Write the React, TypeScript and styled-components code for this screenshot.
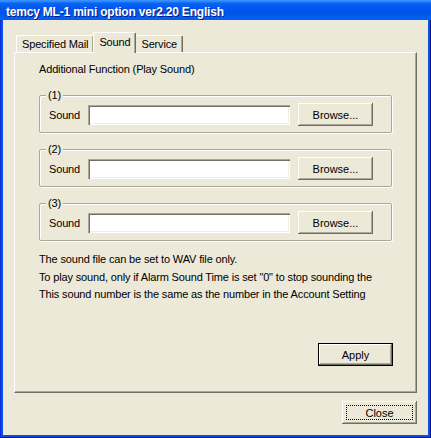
import styled, { createGlobalStyle } from "styled-components";

const GlobalStyle = createGlobalStyle`
  html, body {
    margin: 0;
    padding: 0;
    background: #ece9d8;
  }
  * {
    box-sizing: border-box;
  }
`;

const tabs = ["Specified Mail", "Sound", "Service"];
const sounds = ["(1)", "(2)", "(3)"];
const notes = [
  "The sound file can be set to WAV file only.",
  'To play sound, only if Alarm Sound Time is set "0" to stop sounding the',
  "This sound number is the same as the number in the Account Setting",
];

const App = () => {
  return (
    <>
      <GlobalStyle />
      <Window>
        <TitleBar>temcy ML-1 mini option ver2.20 English</TitleBar>
        <Client>
          <TabStrip>
            {tabs.map((t) => (
              <Tab key={t} $active={t === "Sound"}>
                {t}
              </Tab>
            ))}
          </TabStrip>
          <Panel>
            <Heading>Additional Function (Play Sound)</Heading>
            {sounds.map((s) => (
              <Group key={s}>
                <Caption>{s}</Caption>
                <Row>
                  <Label>Sound</Label>
                  <Input type="text" />
                  <Button>Browse...</Button>
                </Row>
              </Group>
            ))}
            <Notes>
              {notes.map((n, i) => (
                <Note key={i}>{n}</Note>
              ))}
            </Notes>
            <ApplyButton $default>Apply</ApplyButton>
          </Panel>
          <Footer>
            <Button $focus>
              <Focus>Close</Focus>
            </Button>
          </Footer>
        </Client>
      </Window>
    </>
  );
};

const Window = styled.div`
  width: 431px;
  height: 438px;
  display: flex;
  flex-direction: column;
  background: #0a4fe6;
  padding: 0 3px 3px 3px;
  box-shadow: inset -1px -1px 0 #00138c, inset 1px 0 0 #0831d9;
  font-family: "Liberation Sans", Arial, sans-serif;
  font-size: 11px;
  letter-spacing: -0.15px;
  color: #000;
`;

const TitleBar = styled.div`
  height: 20px;
  margin: 0 -3px;
  padding: 3px 0 0 6px;
  display: flex;
  align-items: center;
  background: linear-gradient(
    #3d95ff 0%,
    #2a86ff 8%,
    #0a64f2 16%,
    #0058ee 40%,
    #0055e8 70%,
    #0061f5 88%,
    #0a5ae8 100%
  );
  color: #fff;
  font-family: "Liberation Sans", Arial, sans-serif;
  font-weight: bold;
  font-size: 12px;
  letter-spacing: -0.2px;
  text-shadow: 1px 1px 0 #0a1883;
  white-space: nowrap;
  overflow: hidden;
`;

const Client = styled.div`
  flex: 1;
  background: #ece9d8;
  padding: 12px 11px 0 11px;
  display: flex;
  flex-direction: column;
`;

const TabStrip = styled.div`
  height: 20px;
  display: flex;
  align-items: flex-end;
  padding-left: 2px;
`;

const Tab = styled.div<{ $active?: boolean }>`
  position: relative;
  z-index: ${(p) => (p.$active ? 2 : 1)};
  height: ${(p) => (p.$active ? "21px" : "17px")};
  margin: ${(p) => (p.$active ? "0 -1px -1px -1px" : "0")};
  padding: ${(p) => (p.$active ? "0 5px 3px" : "0 5px")};
  display: flex;
  align-items: center;
  background: #ece9d8;
  border-top: 1px solid #fff;
  border-left: 1px solid #fff;
  border-right: 1px solid #716f64;
  border-radius: 2px 2px 0 0;
  box-shadow: inset -1px 0 0 #aca899;
  white-space: nowrap;
`;

const Panel = styled.div`
  height: 341px;
  display: flex;
  flex-direction: column;
  padding: 10px 24px 26px 24px;
  border-top: 1px solid #fff;
  border-left: 1px solid #fff;
  border-right: 1px solid #716f64;
  border-bottom: 1px solid #716f64;
  box-shadow: inset -1px -1px 0 #aca899;
`;

const Heading = styled.div`
  line-height: 13px;
  margin-bottom: 3px;
`;

const Group = styled.div`
  position: relative;
  margin-top: 16px;
  padding: 7px 0 6px 9px;
  border: 1px solid #aca899;
  border-radius: 2px;
  box-shadow: inset 1px 1px 0 #fff, 1px 1px 0 #fff;
`;

const Caption = styled.span`
  position: absolute;
  top: -7px;
  left: 6px;
  padding: 0 2px;
  line-height: 13px;
  background: #ece9d8;
`;

const Row = styled.div`
  height: 23px;
  display: flex;
  align-items: center;
`;

const Label = styled.span`
  width: 39px;
`;

const Input = styled.input`
  width: 202px;
  height: 20px;
  margin: 0 8px 0 0;
  padding: 0 3px;
  border: none;
  background: #fff;
  box-shadow: inset 1px 1px 0 #aca899, inset 2px 2px 0 #716f64,
    inset -1px -1px 0 #fff, inset -2px -2px 0 #f1efe2;
  font: inherit;
  outline: none;
`;

const Button = styled.button<{ $default?: boolean; $focus?: boolean }>`
  width: 75px;
  height: 23px;
  padding: ${(p) => (p.$focus ? "4px" : "0")};
  border: ${(p) => (p.$default ? "1px solid #000" : "none")};
  background: #ece9d8;
  box-shadow: inset -1px -1px 0 #716f64, inset 1px 1px 0 #fff,
    inset -2px -2px 0 #aca899;
  font: inherit;
  color: #000;
  display: flex;
  align-items: center;
  justify-content: center;
`;

const ApplyButton = styled(Button)`
  margin-top: auto;
  align-self: flex-end;
  margin-right: -1px;
`;

const Focus = styled.span`
  flex: 1;
  align-self: stretch;
  display: flex;
  align-items: center;
  justify-content: center;
  border: 1px dotted #000;
`;

const Notes = styled.div`
  margin-top: 10px;
`;

const Note = styled.div`
  line-height: 17.5px;
  white-space: nowrap;
`;

const Footer = styled.div`
  margin-top: 8px;
  display: flex;
  justify-content: flex-end;
`;

export default App;
